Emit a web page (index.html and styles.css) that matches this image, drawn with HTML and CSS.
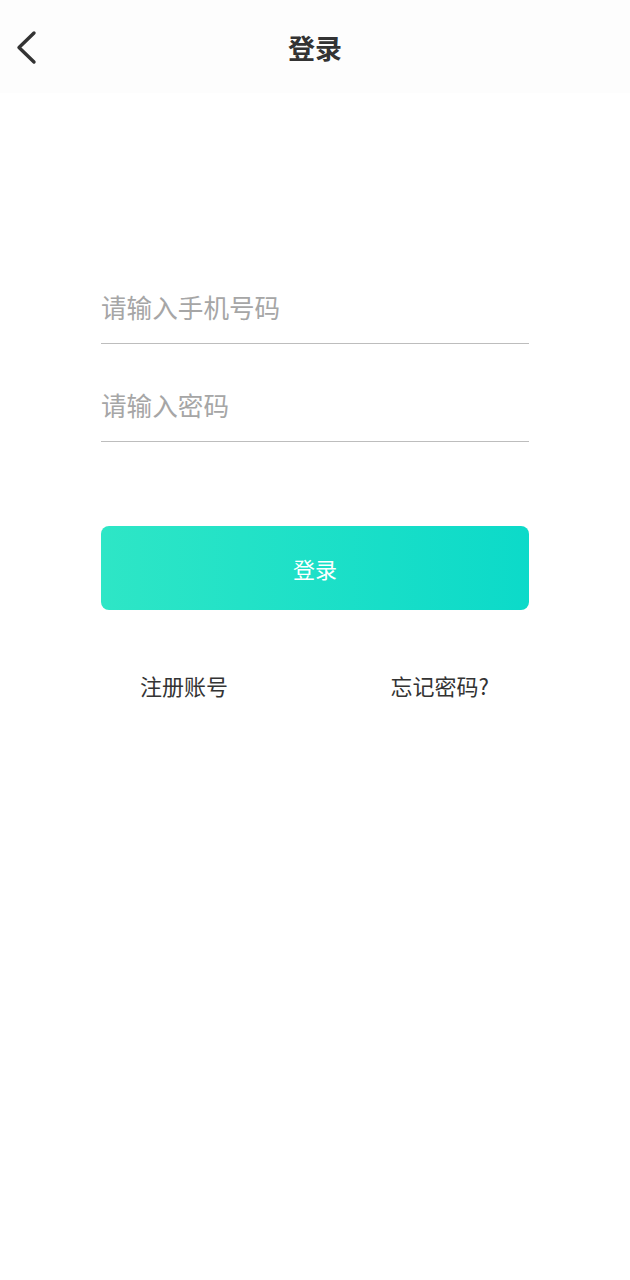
FILE: index.html
```html
<!DOCTYPE html>
<html lang="zh-CN">
<head>
<meta charset="utf-8">
<title>登录</title>
<link rel="stylesheet" href="styles.css">
</head>
<body>
<div class="page">
  <header class="topbar">
    <button class="back" aria-label="返回">
      <svg width="24" height="36" viewBox="0 0 24 36"><path d="M19 3 L4 17.5 L19 32" fill="none" stroke="#333" stroke-width="3.4" stroke-linecap="round" stroke-linejoin="round"/></svg>
    </button>
    <h1 class="title">登录</h1>
  </header>
  <main class="form">
    <div class="field"><input class="input" type="tel" placeholder="请输入手机号码"></div>
    <div class="field"><input class="input" type="password" placeholder="请输入密码"></div>
    <button class="submit">登录</button>
    <div class="links">
      <a class="link">注册账号</a>
      <a class="link">忘记密码?</a>
    </div>
  </main>
</div>
</body>
</html>
```
FILE: styles.css
```css
* { box-sizing: border-box; }
html, body { margin: 0; padding: 0; background: #fff; }
body { font-family: "Noto Sans CJK SC", "Noto Sans", sans-serif; color: #333; }
.page { width: 630px; min-height: 1280px; background: #fff; }
.topbar {
  height: 93px;
  background: #fdfdfd;
  display: flex;
  align-items: center;
  justify-content: center;
  position: relative;
}
.back {
  position: absolute;
  left: 15px;
  top: 30px;
  padding: 0;
  border: 0;
  background: none;
  width: 24px;
  height: 36px;
}
.back svg { display: block; }
.title {
  margin: 0;
  font-size: 27px;
  font-weight: 700;
  color: #333;
  line-height: 1;
  margin-top: 2px;
}
.form {
  padding: 153px 101px 0;
  display: flex;
  flex-direction: column;
}
.field {
  height: 98px;
  border-bottom: 1px solid #bdbdbd;
  display: flex;
  align-items: flex-end;
  padding-bottom: 18px;
}
.input {
  width: 100%;
  border: 0;
  outline: none;
  background: transparent;
  font-family: inherit;
  font-size: 25.6px;
  line-height: 36px;
  padding: 0;
  color: #333;
}
.input::placeholder { color: #a6a6a6; }
.submit {
  margin-top: 84px;
  height: 84px;
  border: 0;
  border-radius: 8px;
  background: linear-gradient(90deg, #2ee6c6 0%, #0cdac9 100%);
  color: #fff;
  font-family: inherit;
  font-size: 22px;
  padding: 0;
}
.links {
  margin-top: 60px;
  display: flex;
  justify-content: space-between;
  padding: 0 40px 0 39px;
}
.link {
  font-size: 22px;
  color: #333;
  line-height: 30px;
}
```
